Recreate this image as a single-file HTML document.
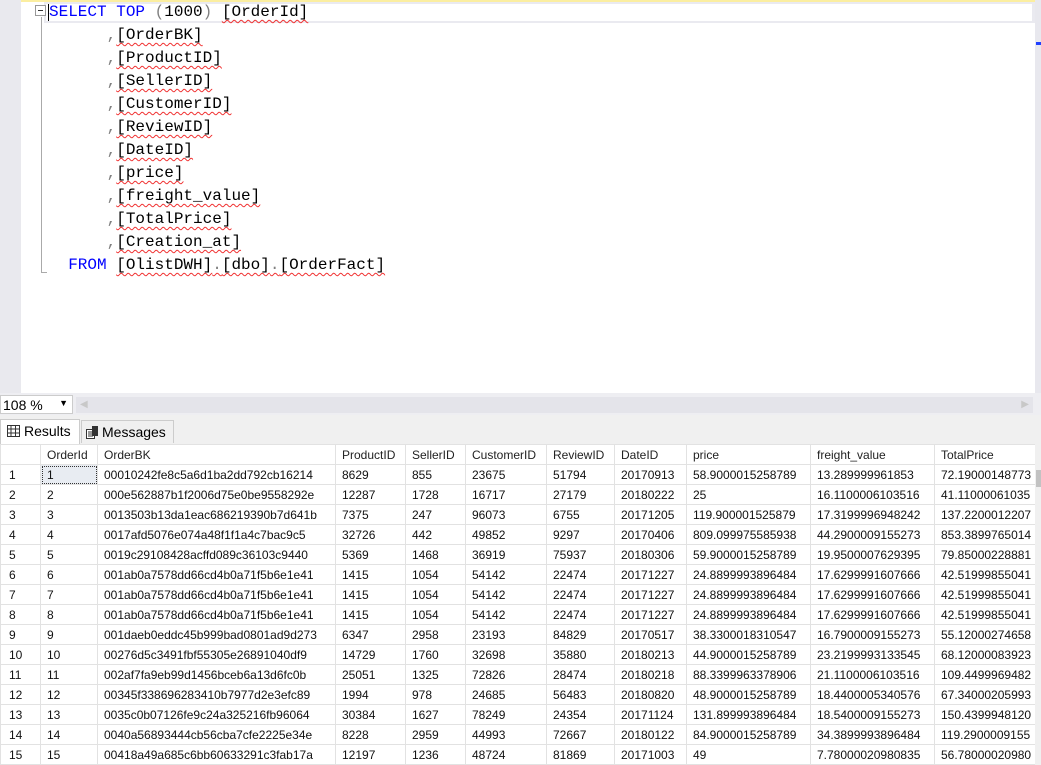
<!DOCTYPE html>
<html><head><meta charset="utf-8"><style>
*{margin:0;padding:0;box-sizing:border-box}
body{width:1041px;height:765px;overflow:hidden;background:#fff;position:relative;font-family:"Liberation Sans",sans-serif}
.ed{position:absolute;left:0;top:0;width:1041px;height:393px;background:#fff}
.gut{position:absolute;left:0;top:0;width:21px;height:393px;background:#e9e9ee}
.topy{position:absolute;left:21px;top:0;width:1020px;height:2px;background:#fbeea0}
.cur{position:absolute;left:44px;top:2px;width:991px;height:21px;border:2px solid #eaeaf0;border-right:3px solid #eaeaf0}
.vsb{position:absolute;left:1035px;top:0;width:6px;height:393px;background:#e8e8ee}
.code{position:absolute;left:49px;top:1px;font-family:"Liberation Mono",monospace;font-size:16px;line-height:23px;white-space:pre;color:#000}
.k{color:#0000ff}.g{color:#808080}
.sq{text-decoration:underline wavy #f03030;text-decoration-thickness:1px;text-underline-offset:3px}
.fold{position:absolute;left:35px;top:5px;width:11px;height:11px;border:1px solid #999;background:#fff}
.fold:after{content:"";position:absolute;left:2px;top:4px;width:5px;height:1px;background:#333}
.fl{position:absolute;left:41px;top:17px;width:1px;height:256px;background:#aaa}
.fl2{position:absolute;left:41px;top:272px;width:6px;height:1px;background:#aaa}
.zb{position:absolute;left:0;top:393px;width:1041px;height:22px;background:#eeeef2}
.zsel{position:absolute;left:0;top:395px;width:73px;height:19px;background:#fff;border:1px solid #ccc;font-size:14px;padding:1px 2px}
.hs{position:absolute;left:76px;top:397px;width:957px;height:16px;background:#e4e4ea}
.tabs{position:absolute;left:0;top:415px;width:1041px;height:29px;background:#f0f0f0}
.tab{position:absolute;top:420px;height:23px;font-size:14px;padding:3px 4px;border:1px solid #ccc;border-bottom:none;white-space:nowrap}
.grid{position:absolute;left:0;top:444px;width:1035px;height:321px;background:#fff;border-top:1px solid #ccc}
table{border-collapse:collapse;font-size:12px;table-layout:fixed;position:absolute;left:0;top:444px}
td{height:20px;border:1px solid #e2e2e2;padding:0 0 0 6px;white-space:nowrap;overflow:hidden;color:#111}
tr.h td{background:#fff;color:#222}
td:first-child{padding-left:8px}
.sb{position:absolute;left:1035px;top:444px;width:6px;height:321px;background:#f0f0f0}
.sbt{position:absolute;left:1036px;top:470px;width:5px;height:17px;background:#c2c2c2}
</style></head><body>
<div class="ed">
<div class="gut"></div><div class="topy"></div><div class="cur"></div><div class="vsb"></div>
<div style="position:absolute;left:1036px;top:42px;width:5px;height:3px;background:#2040ff"></div>
<div class="fold"></div><div class="fl"></div><div class="fl2"></div>
<div style="position:absolute;left:48px;top:4px;width:1px;height:17px;background:#000"></div>
<div class="code"><span class="k">SELECT TOP</span> <span class="g">(</span>1000<span class="g">)</span> <span class="sq">[OrderId]</span>
      <span class="g">,</span><span class="sq">[OrderBK]</span>
      <span class="g">,</span><span class="sq">[ProductID]</span>
      <span class="g">,</span><span class="sq">[SellerID]</span>
      <span class="g">,</span><span class="sq">[CustomerID]</span>
      <span class="g">,</span><span class="sq">[ReviewID]</span>
      <span class="g">,</span><span class="sq">[DateID]</span>
      <span class="g">,</span><span class="sq">[price]</span>
      <span class="g">,</span><span class="sq">[freight_value]</span>
      <span class="g">,</span><span class="sq">[TotalPrice]</span>
      <span class="g">,</span><span class="sq">[Creation_at]</span>
  <span class="k">FROM</span> <span class="sq">[OlistDWH]<span class="g">.</span>[dbo]<span class="g">.</span>[OrderFact]</span></div>
</div>
<div class="zb"></div>
<div class="zsel">108 %<span style="position:absolute;right:4px;top:2px;font-size:9px">▼</span></div>
<div class="hs"><span style="position:absolute;left:4px;top:2px;color:#c8c8c8;font-size:10px">◀</span><span style="position:absolute;right:4px;top:2px;color:#c8c8c8;font-size:10px">▶</span></div>
<div class="tabs"></div>
<div class="tab" style="left:0;width:80px;background:#fff;top:419px;height:25px;padding-left:6px">
<svg width="13" height="12" style="vertical-align:-1px;margin-right:4px"><rect x="0.5" y="0.5" width="12" height="11" fill="none" stroke="#333"/><path d="M0 4h13M0 8h13M4 0v12M8.5 0v12" stroke="#333"/></svg>Results</div>
<div class="tab" style="left:81px;width:93px;background:#f0f0f0">
<svg width="13" height="13" style="vertical-align:-2px;margin-right:3px"><rect x="0.5" y="3.5" width="8" height="9" fill="#fff" stroke="#333"/><rect x="6" y="0" width="6" height="10" fill="#333"/><path d="M2 6h5M2 8h5M2 10h5" stroke="#333"/></svg>Messages</div>
<div class="grid"></div>
<table>
<colgroup><col style="width:40px"><col style="width:57px"><col style="width:238px"><col style="width:70px"><col style="width:60px"><col style="width:81px"><col style="width:68px"><col style="width:72px"><col style="width:124px"><col style="width:124px"><col style="width:101px"></colgroup>
<tr class="h"><td></td><td>OrderId</td><td>OrderBK</td><td>ProductID</td><td>SellerID</td><td>CustomerID</td><td>ReviewID</td><td>DateID</td><td>price</td><td>freight_value</td><td>TotalPrice</td></tr>
<tr><td>1</td><td style="background:#e8ecf2;outline:1px dotted #333;outline-offset:-2px">1</td><td>00010242fe8c5a6d1ba2dd792cb16214</td><td>8629</td><td>855</td><td>23675</td><td>51794</td><td>20170913</td><td>58.9000015258789</td><td>13.289999961853</td><td>72.19000148773</td></tr>
<tr><td>2</td><td>2</td><td>000e562887b1f2006d75e0be9558292e</td><td>12287</td><td>1728</td><td>16717</td><td>27179</td><td>20180222</td><td>25</td><td>16.1100006103516</td><td>41.11000061035</td></tr>
<tr><td>3</td><td>3</td><td>0013503b13da1eac686219390b7d641b</td><td>7375</td><td>247</td><td>96073</td><td>6755</td><td>20171205</td><td>119.900001525879</td><td>17.3199996948242</td><td>137.2200012207</td></tr>
<tr><td>4</td><td>4</td><td>0017afd5076e074a48f1f1a4c7bac9c5</td><td>32726</td><td>442</td><td>49852</td><td>9297</td><td>20170406</td><td>809.099975585938</td><td>44.2900009155273</td><td>853.3899765014</td></tr>
<tr><td>5</td><td>5</td><td>0019c29108428acffd089c36103c9440</td><td>5369</td><td>1468</td><td>36919</td><td>75937</td><td>20180306</td><td>59.9000015258789</td><td>19.9500007629395</td><td>79.85000228881</td></tr>
<tr><td>6</td><td>6</td><td>001ab0a7578dd66cd4b0a71f5b6e1e41</td><td>1415</td><td>1054</td><td>54142</td><td>22474</td><td>20171227</td><td>24.8899993896484</td><td>17.6299991607666</td><td>42.51999855041</td></tr>
<tr><td>7</td><td>7</td><td>001ab0a7578dd66cd4b0a71f5b6e1e41</td><td>1415</td><td>1054</td><td>54142</td><td>22474</td><td>20171227</td><td>24.8899993896484</td><td>17.6299991607666</td><td>42.51999855041</td></tr>
<tr><td>8</td><td>8</td><td>001ab0a7578dd66cd4b0a71f5b6e1e41</td><td>1415</td><td>1054</td><td>54142</td><td>22474</td><td>20171227</td><td>24.8899993896484</td><td>17.6299991607666</td><td>42.51999855041</td></tr>
<tr><td>9</td><td>9</td><td>001daeb0eddc45b999bad0801ad9d273</td><td>6347</td><td>2958</td><td>23193</td><td>84829</td><td>20170517</td><td>38.3300018310547</td><td>16.7900009155273</td><td>55.12000274658</td></tr>
<tr><td>10</td><td>10</td><td>00276d5c3491fbf55305e26891040df9</td><td>14729</td><td>1760</td><td>32698</td><td>35880</td><td>20180213</td><td>44.9000015258789</td><td>23.2199993133545</td><td>68.12000083923</td></tr>
<tr><td>11</td><td>11</td><td>002af7fa9eb99d1456bceb6a13d6fc0b</td><td>25051</td><td>1325</td><td>72826</td><td>28474</td><td>20180218</td><td>88.3399963378906</td><td>21.1100006103516</td><td>109.4499969482</td></tr>
<tr><td>12</td><td>12</td><td>00345f338696283410b7977d2e3efc89</td><td>1994</td><td>978</td><td>24685</td><td>56483</td><td>20180820</td><td>48.9000015258789</td><td>18.4400005340576</td><td>67.34000205993</td></tr>
<tr><td>13</td><td>13</td><td>0035c0b07126fe9c24a325216fb96064</td><td>30384</td><td>1627</td><td>78249</td><td>24354</td><td>20171124</td><td>131.899993896484</td><td>18.5400009155273</td><td>150.4399948120</td></tr>
<tr><td>14</td><td>14</td><td>0040a56893444cb56cba7cfe2225e34e</td><td>8228</td><td>2959</td><td>44993</td><td>72667</td><td>20180122</td><td>84.9000015258789</td><td>34.3899993896484</td><td>119.2900009155</td></tr>
<tr><td>15</td><td>15</td><td>00418a49a685c6bb60633291c3fab17a</td><td>12197</td><td>1236</td><td>48724</td><td>81869</td><td>20171003</td><td>49</td><td>7.78000020980835</td><td>56.78000020980</td></tr>
</table>
<div class="sb"></div><div class="sbt"></div>
</body></html>
